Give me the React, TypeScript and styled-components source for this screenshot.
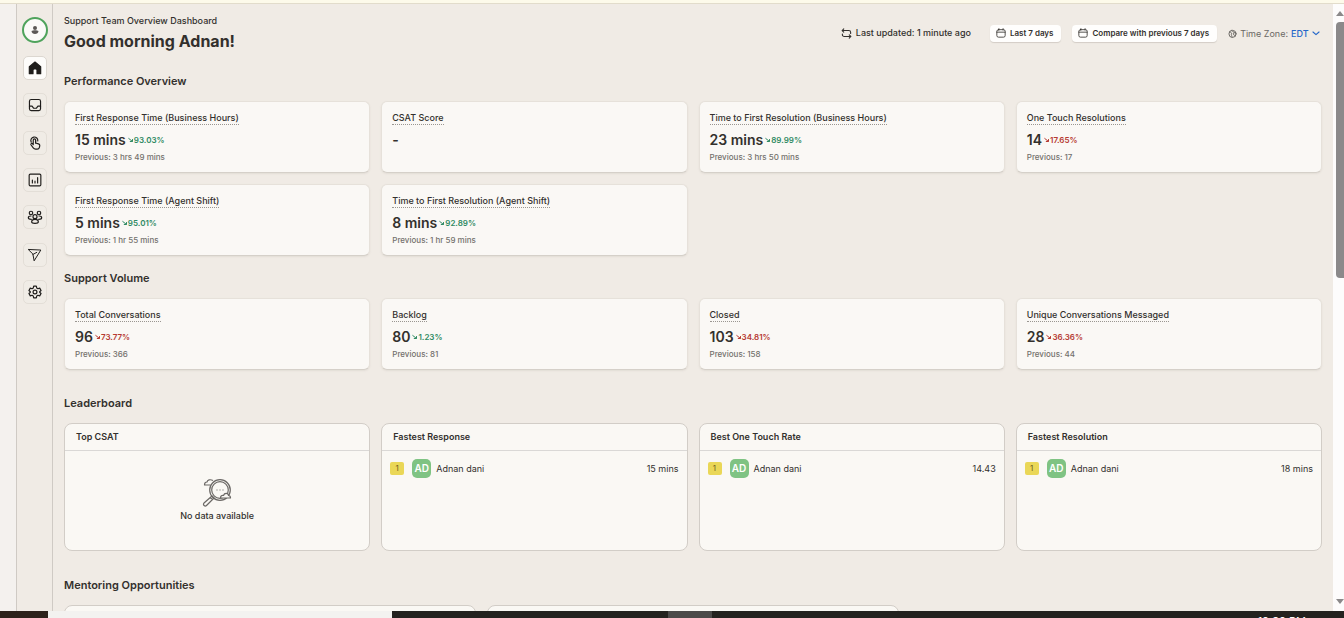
import React from "react";
import styled, { createGlobalStyle } from "styled-components";

const Global = createGlobalStyle`
  * { box-sizing: border-box; }
  body { margin: 0; font-family: Inter, "Liberation Sans", sans-serif; color: #33302d; background: #f0ebe5; }
  button, select { font-family: inherit; color: inherit; }
  h1, h2, h3, p, ul, dl, dd, dt { margin: 0; padding: 0; }
`;

const Screen = styled.div`
  height: 100vh;
  display: flex;
  flex-direction: column;
  overflow: hidden;
`;

const TopStrip = styled.div`
  flex: none;
  height: 4px;
  background: #fdfaea;
  border-bottom: 1px solid #e2dccb;
`;

const Body = styled.div`
  flex: 1;
  min-height: 0;
  display: flex;
`;

const Gutter = styled.div`
  flex: none;
  width: 17px;
  background: #f4f1ee;
  border-right: 1px solid #cfcac4;
`;

const Sidebar = styled.aside`
  flex: none;
  width: 36px;
  padding-top: 13px;
  display: flex;
  flex-direction: column;
  align-items: center;
  gap: 13px;
  border-right: 1px solid #cfcac4;
`;

const Avatar = styled.button`
  width: 26px;
  height: 26px;
  padding: 0;
  display: grid;
  place-items: center;
  border: 2px solid #4fa35c;
  border-radius: 50%;
  background: #fbfaf8;
`;

const Nav = styled.nav`
  height: 248px;
  display: flex;
  flex-direction: column;
  justify-content: space-between;
`;

const NavButton = styled.button<{ $active?: boolean }>`
  width: 24px;
  height: 24px;
  padding: 0;
  display: grid;
  place-items: center;
  border: 1px solid ${(p) => (p.$active ? "#dcd7d0" : "#e3ded7")};
  border-radius: 5px;
  color: #1f1d1b;
  background: ${(p) => (p.$active ? "#fdfcfa" : "#f0ece6")};
`;

const Main = styled.main`
  flex: 1;
  min-width: 0;
  overflow: hidden;
  padding: 9px 11px 0;
`;

const Header = styled.header`
  display: flex;
  justify-content: space-between;
  align-items: flex-start;
  height: 60px;
`;

const Crumb = styled.p`
  font-size: 9px;
  line-height: 16px;
  font-weight: 500;
`;

const Greeting = styled.h1`
  font-size: 16px;
  line-height: 24px;
  font-weight: 700;
`;

const Tools = styled.div`
  display: flex;
  align-items: center;
  gap: 11px;
  padding: 11px 2px 0 0;
`;

const Updated = styled.span`
  display: flex;
  align-items: center;
  gap: 4px;
  margin-right: 8px;
  font-size: 9px;
  line-height: 18px;
  font-weight: 500;
`;

const Pill = styled.button`
  display: flex;
  align-items: center;
  gap: 4px;
  height: 17px;
  padding: 0 8px 0 6px;
  border: 0;
  border-radius: 4px;
  background: #fffefd;
  box-shadow: 0 1px 1px #d3cdc6;
  font-size: 8px;
  font-weight: 600;
`;

const Zone = styled.label`
  display: flex;
  align-items: center;
  gap: 3px;
  font-size: 9px;
  color: #6b6864;
`;

const ZoneSelect = styled.select`
  appearance: none;
  padding: 0;
  border: 0;
  background: none;
  color: #2467c9;
  font-size: 9px;
  font-weight: 500;
`;

const Section = styled.section<{ $space: number }>`
  margin-bottom: ${(p) => p.$space}px;
`;

const SectionTitle = styled.h2`
  margin-bottom: 12px;
  font-size: 11px;
  line-height: 16px;
  font-weight: 600;
`;

const Grid = styled.div<{ $columns: number }>`
  display: grid;
  grid-template-columns: repeat(${(p) => p.$columns}, minmax(0, 1fr));
  gap: 11px;
`;

const Card = styled.article`
  height: 72px;
  padding: 9px 10px;
  display: flex;
  flex-direction: column;
  align-items: flex-start;
  border: 1px solid #e6e1da;
  border-bottom-color: #d5d0c9;
  border-radius: 6px;
  background: #faf8f5;
  box-shadow: 0 1px 2px #e2ddd6;
`;

const CardTitle = styled.h3`
  font-size: 9px;
  line-height: 13px;
  font-weight: 500;
  border-bottom: 1px dotted #9a9691;
`;

const ValueRow = styled.div`
  display: flex;
  align-items: center;
  gap: 2px;
  margin-top: 6px;
`;

const Value = styled.strong`
  font-size: 14px;
  line-height: 18px;
  font-weight: 600;
`;

const Change = styled.span<{ $bad?: boolean }>`
  display: flex;
  align-items: center;
  font-size: 8px;
  line-height: 18px;
  font-weight: 600;
  color: ${(p) => (p.$bad ? "#b63a32" : "#2f8a63")};
`;

const Previous = styled.p`
  margin-top: 2px;
  font-size: 8px;
  line-height: 12px;
  font-weight: 500;
  color: #73706c;
`;

const Board = styled.article`
  height: 128px;
  display: flex;
  flex-direction: column;
  border: 1px solid #d2cdc7;
  border-radius: 8px;
  background: #faf8f4;
`;

const BoardTitle = styled.h3`
  padding: 0 11px;
  font-size: 9px;
  line-height: 26px;
  font-weight: 600;
  border-bottom: 1px solid #dad8d6;
`;

const Rank = styled.div`
  display: flex;
  align-items: center;
  padding: 8px;
  font-size: 9px;
`;

const Medal = styled.span`
  width: 14px;
  margin-right: 8px;
  border-radius: 2px;
  line-height: 13px;
  font-size: 8px;
  text-align: center;
  color: #6f6022;
  background: #ead757;
`;

const Initials = styled.span`
  width: 19px;
  margin-right: 5px;
  border-radius: 5px;
  line-height: 19px;
  font-size: 10px;
  font-weight: 600;
  text-align: center;
  color: #fff;
  background: #7fc383;
`;

const Score = styled.span`
  margin-left: auto;
`;

const Empty = styled.div`
  flex: 1;
  display: flex;
  flex-direction: column;
  align-items: center;
  justify-content: center;
  gap: 2px;
  padding-bottom: 2px;
  font-size: 9px;
  line-height: 14px;
  font-weight: 500;
`;

const ScrollTrack = styled.div`
  flex: none;
  width: 11px;
  padding: 6px 0 6px 3px;
  display: flex;
  flex-direction: column;
  background: #fdfcfc;
`;

const Thumb = styled.div`
  height: 256px;
  margin: 5px 0 auto;
  border-radius: 4px 0 0 4px;
  background: #8b898a;
`;

const Taskbar = styled.footer`
  flex: none;
  height: 7px;
  display: flex;
  overflow: hidden;
  background: #24221f;
`;

const TaskSlot = styled.div<{ $width: number; $color: string }>`
  flex: none;
  width: ${(p) => p.$width}px;
  background: ${(p) => p.$color};
`;

const Clock = styled.time`
  margin: 4px 38px 0 auto;
  font-size: 11px;
  line-height: 12px;
  color: #fff;
`;

const Svg = ({ size = 14, width = 1.8, children }: { size?: number; width?: number; children: React.ReactNode }) => (
  <svg width={size} height={size} viewBox="0 0 24 24" fill="none" stroke="currentColor" strokeWidth={width} strokeLinecap="round" strokeLinejoin="round" aria-hidden="true">
    {children}
  </svg>
);

const HomeIcon = () => (
  <Svg size={16}>
    <path d="M12 3 3.5 10v10.5H9V15a1.5 1.5 0 0 1 1.5-1.5h3A1.5 1.5 0 0 1 15 15v5.5h5.5V10Z" fill="currentColor" />
  </Svg>
);
const InboxIcon = () => (
  <Svg width={2}>
    <rect x="2.5" y="2.5" width="19" height="19" rx="3" />
    <path d="M2.5 14H7l2.5 3.5h5L17 14h4.5" />
  </Svg>
);
const TouchIcon = () => (
  <Svg width={2}>
    <path d="M9 15V7a2 2 0 0 1 4 0v5l5 1.4a3 3 0 0 1 2.2 3l-.6 3A4 4 0 0 1 15.7 22.5H13a5 5 0 0 1-4-2l-4-5.5a1.7 1.7 0 0 1 2.6-2L9 15" />
    <path d="M5.500 10.500A6 6 0 1 1 16.800 8.500M13 12V7" />
  </Svg>
);
const ReportIcon = () => (
  <Svg width={2}>
    <rect x="2" y="2" width="20" height="20" rx="2" />
    <path d="M7.500 17v-5M12 17v-3M16.500 17V8" />
  </Svg>
);
const TeamIcon = () => (
  <Svg size={16} width={1.8}>
    <circle cx="6" cy="6" r="2.6" />
    <circle cx="18" cy="6" r="2.6" />
    <circle cx="12" cy="11.500" r="3" />
    <path d="M7 19.500c0-2.500 2-4 5-4s5 1.500 5 4c0 1.500-2 2-5 2s-5-.5-5-2Z" />
    <path d="M6.500 15.500c-3 0-4.500-.8-4.500-2.500s1.500-2.500 4-2.500M17.500 15.500c3 0 4.500-.8 4.500-2.500s-1.500-2.500-4-2.500" />
  </Svg>
);
const SendIcon = () => (
  <Svg width={1.7}>
    <path d="M1 2.500 22 3.500 10.500 22 8.500 11Z" />
    <path d="m8.500 11 6.500-3.500" />
  </Svg>
);
const GearIcon = () => (
  <Svg width={2}>
    <path d="M9.700 2h4.600l.7 3.200 2 1.200 3.100-1 2.300 4L20 11.500v1l2.400 2.100-2.300 4-3.100-1-2 1.200-.7 3.200H9.700L9 18.800l-2-1.200-3.100 1-2.300-4L4 12.500v-1L1.600 9.400l2.300-4 3.100 1 2-1.200Z" />
    <circle cx="12" cy="12" r="3.300" />
  </Svg>
);
const CalendarIcon = () => (
  <Svg size={10} width={2}>
    <rect x="2" y="4" width="20" height="18" rx="4" />
    <path d="M2 10h20M7 1.500V5M17 1.500V5" />
  </Svg>
);
const RefreshIcon = () => (
  <Svg size={11} width={2.4}>
    <path d="M6 2 2.500 5.500 6 9M2.500 5.500H17a4 4 0 0 1 4 4V12M18 22l3.500-3.500L18 15M21.500 18.500H7a4 4 0 0 1-4-4V13" />
  </Svg>
);
const GlobeIcon = () => (
  <Svg size={9} width={2.6}>
    <circle cx="12" cy="13" r="9.500" />
    <path d="M4 8c5 0 6 3 5 6s2 3 2 8M21 10c-4-1-7 0-7 3s4 4 6 5M10 4l6 5" />
  </Svg>
);
const ChevronIcon = () => (
  <Svg size={8} width={3.4}>
    <path d="m3 9 9 8 9-8" stroke="#2467c9" />
  </Svg>
);
const TrendIcon = () => (
  <Svg size={6} width={4}>
    <path d="m3 6 14 11M18 10v8H9" />
  </Svg>
);
const PersonIcon = () => (
  <svg width="10" height="10" viewBox="0 0 10 10" fill="#5c5856" aria-hidden="true">
    <circle cx="5" cy="3" r="2" />
    <path d="M1.500 6c1.500-1 5.500-1 7 0 0 4-7 4-7 0Z" />
  </svg>
);
const EmptyIcon = () => (
  <svg width="30" height="30" viewBox="0 0 30 30" fill="none" stroke="#6b6865" strokeWidth="1.200" strokeLinejoin="round" aria-hidden="true">
    <circle cx="18" cy="13" r="10.300" />
    <circle cx="18" cy="13" r="8.300" />
    <path d="M8.500 8H2.500c0-2 1-3 2.500-3 .5-2 3-3 6-1.500" />
    <path d="M18.500 21c0-2 1.500-3 3-2.500 1-3 5-2.500 5 0 1.500 0 2 1 2 2.500Z" fill="#faf8f4" />
    <path d="m10 19 2 2-7.500 7.500c-1.500 1.500-4-.5-2.500-2.500ZM8.500 21l2 1.500" />
    <path d="M14.500 13h1M17.500 13h1M20.500 13h1" />
  </svg>
);

const navItems = [
  { label: "Home", Icon: HomeIcon },
  { label: "Inbox", Icon: InboxIcon },
  { label: "Touch", Icon: TouchIcon },
  { label: "Reports", Icon: ReportIcon },
  { label: "Team", Icon: TeamIcon },
  { label: "Send", Icon: SendIcon },
  { label: "Settings", Icon: GearIcon },
];

type Metric = { title: string; value: string; change?: string; bad?: boolean; previous?: string };

const performance: Metric[] = [
  { title: "First Response Time (Business Hours)", value: "15 mins", change: "93.03%", previous: "3 hrs 49 mins" },
  { title: "CSAT Score", value: "-" },
  { title: "Time to First Resolution (Business Hours)", value: "23 mins", change: "89.99%", previous: "3 hrs 50 mins" },
  { title: "One Touch Resolutions", value: "14", change: "17.65%", bad: true, previous: "17" },
  { title: "First Response Time (Agent Shift)", value: "5 mins", change: "95.01%", previous: "1 hr 55 mins" },
  { title: "Time to First Resolution (Agent Shift)", value: "8 mins", change: "92.89%", previous: "1 hr 59 mins" },
];

const volume: Metric[] = [
  { title: "Total Conversations", value: "96", change: "73.77%", bad: true, previous: "366" },
  { title: "Backlog", value: "80", change: "1.23%", previous: "81" },
  { title: "Closed", value: "103", change: "34.81%", bad: true, previous: "158" },
  { title: "Unique Conversations Messaged", value: "28", change: "36.36%", bad: true, previous: "44" },
];

const boards = [
  { title: "Top CSAT" },
  { title: "Fastest Response", score: "15 mins" },
  { title: "Best One Touch Rate", score: "14.43" },
  { title: "Fastest Resolution", score: "18 mins" },
];

const MetricGrid = ({ items }: { items: Metric[] }) => (
  <Grid $columns={4}>
    {items.map((m) => (
      <Card key={m.title}>
        <CardTitle>{m.title}</CardTitle>
        <ValueRow>
          <Value>{m.value}</Value>
          {m.change && (
            <Change $bad={m.bad}>
              <TrendIcon />
              {m.change}
            </Change>
          )}
        </ValueRow>
        {m.previous && <Previous>Previous: {m.previous}</Previous>}
      </Card>
    ))}
  </Grid>
);

export default function App() {
  return (
    <Screen>
      <Global />
      <TopStrip />
      <Body>
        <Gutter />
        <Sidebar>
          <Avatar aria-label="Account">
            <PersonIcon />
          </Avatar>
          <Nav>
            {navItems.map(({ label, Icon }, i) => (
              <NavButton key={label} aria-label={label} $active={i === 0}>
                <Icon />
              </NavButton>
            ))}
          </Nav>
        </Sidebar>
        <Main>
          <Header>
            <div>
              <Crumb>Support Team Overview Dashboard</Crumb>
              <Greeting>Good morning Adnan!</Greeting>
            </div>
            <Tools>
              <Updated>
                <RefreshIcon />
                Last updated: 1 minute ago
              </Updated>
              <Pill>
                <CalendarIcon />
                Last 7 days
              </Pill>
              <Pill>
                <CalendarIcon />
                Compare with previous 7 days
              </Pill>
              <Zone>
                <GlobeIcon />
                Time Zone:
                <ZoneSelect defaultValue="EDT">
                  <option>EDT</option>
                </ZoneSelect>
                <ChevronIcon />
              </Zone>
            </Tools>
          </Header>
          <Section $space={14}>
            <SectionTitle>Performance Overview</SectionTitle>
            <MetricGrid items={performance} />
          </Section>
          <Section $space={25}>
            <SectionTitle>Support Volume</SectionTitle>
            <MetricGrid items={volume} />
          </Section>
          <Section $space={26}>
            <SectionTitle>Leaderboard</SectionTitle>
            <Grid $columns={4}>
              {boards.map((b) => (
                <Board key={b.title}>
                  <BoardTitle>{b.title}</BoardTitle>
                  {b.score ? (
                    <Rank>
                      <Medal>1</Medal>
                      <Initials>AD</Initials>
                      Adnan dani
                      <Score>{b.score}</Score>
                    </Rank>
                  ) : (
                    <Empty>
                      <EmptyIcon />
                      No data available
                    </Empty>
                  )}
                </Board>
              ))}
            </Grid>
          </Section>
          <Section $space={0}>
            <SectionTitle>Mentoring Opportunities</SectionTitle>
            <Grid $columns={3}>
              <Board />
              <Board />
            </Grid>
          </Section>
        </Main>
        <ScrollTrack>
          <svg width="8" height="7" viewBox="0 0 8 7" aria-hidden="true">
            <path d="M0 6 4 1l4 5Z" fill="#8b898a" />
          </svg>
          <Thumb />
          <svg width="8" height="7" viewBox="0 0 8 7" aria-hidden="true">
            <path d="M0 1h8L4 6Z" fill="#8b898a" />
          </svg>
        </ScrollTrack>
      </Body>
      <Taskbar>
        <TaskSlot $width={48} $color="#2d221b" />
        <TaskSlot $width={344} $color="#f3f2f0" />
        <TaskSlot $width={276} $color="#24221f" />
        <TaskSlot $width={44} $color="#4c4a49" />
        <Clock>10:30 PM</Clock>
      </Taskbar>
    </Screen>
  );
}
